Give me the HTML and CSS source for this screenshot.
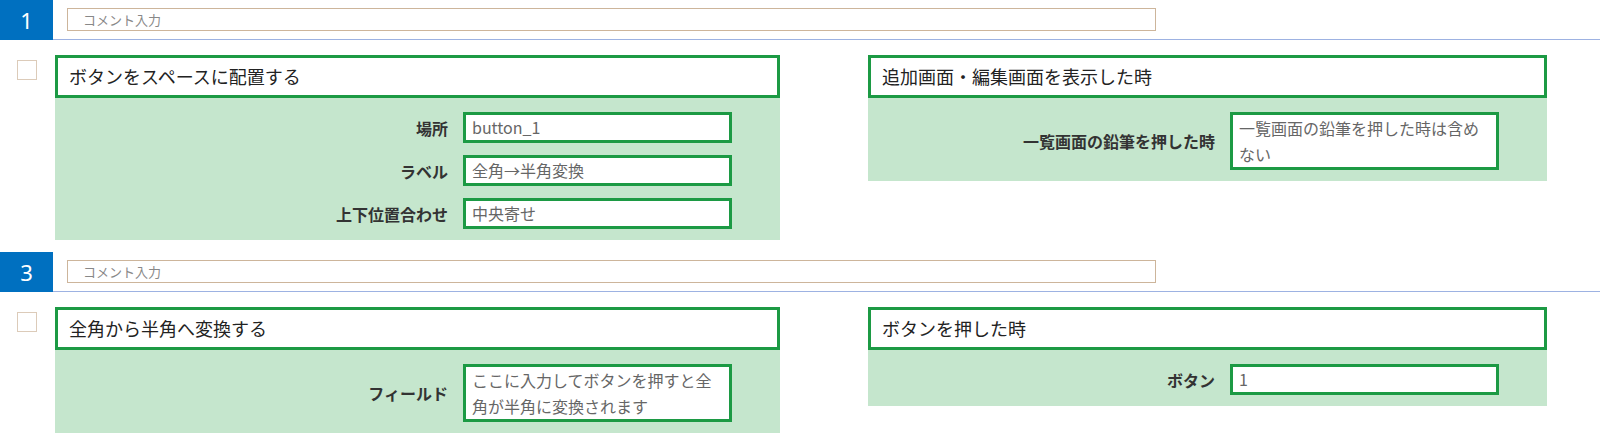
FILE: index.html
```html
<!DOCTYPE html>
<html>
	<head>
		<meta charset="UTF-8" />
		<title>Rules</title>
		<link rel="stylesheet" href="styles.css">
	</head>
	<body>
		<div class="section">
			<div class="section-head">
				<div class="num">1</div>
				<div class="head-line">
					<div class="comment">コメント入力</div>
				</div>
			</div>
			<div class="section-body">
				<span class="check"></span>
				<div class="card card-left">
					<div class="card-title">ボタンをスペースに配置する</div>
					<div class="fields">
						<div class="field"><span class="label">場所</span><div class="val">button_1</div></div>
						<div class="field"><span class="label">ラベル</span><div class="val">全角→半角変換</div></div>
						<div class="field"><span class="label">上下位置合わせ</span><div class="val">中央寄せ</div></div>
					</div>
				</div>
				<div class="card card-right">
					<div class="card-title">追加画面・編集画面を表示した時</div>
					<div class="fields">
						<div class="field"><span class="label">一覧画面の鉛筆を押した時</span><div class="val multi">一覧画面の鉛筆を押した時は含めない</div></div>
					</div>
				</div>
			</div>
		</div>
		<div class="section">
			<div class="section-head">
				<div class="num">3</div>
				<div class="head-line">
					<div class="comment">コメント入力</div>
				</div>
			</div>
			<div class="section-body">
				<span class="check"></span>
				<div class="card card-left">
					<div class="card-title">全角から半角へ変換する</div>
					<div class="fields">
						<div class="field"><span class="label">フィールド</span><div class="val multi">ここに入力してボタンを押すと全角が半角に変換されます</div></div>
					</div>
				</div>
				<div class="card card-right">
					<div class="card-title">ボタンを押した時</div>
					<div class="fields">
						<div class="field"><span class="label">ボタン</span><div class="val">1</div></div>
					</div>
				</div>
			</div>
		</div>
	</body>
</html>
```

FILE: styles.css
```css
* {
	margin: 0;
	padding: 0;
	box-sizing: border-box;
}
body {
	font-family: "Noto Sans CJK JP", "Noto Sans", sans-serif;
	color: #333;
	background: #fff;
}
.section-head {
	display: flex;
	height: 40px;
}
.num {
	width: 53px;
	height: 40px;
	background: #0070c0;
	color: #fff;
	font-family: "Noto Sans", sans-serif;
	font-size: 22px;
	line-height: 40px;
	text-align: center;
}
.head-line {
	flex: 1;
	border-bottom: 1px solid #9db2e2;
	padding: 8px 0 0 14px;
}
.comment {
	width: 1089px;
	height: 23px;
	border: 1px solid #cdb59b;
	padding-left: 15px;
	font-size: 13px;
	line-height: 21px;
	color: #888;
}
.section-body {
	display: flex;
	align-items: flex-start;
	padding: 15px 0 12px;
}
.check {
	width: 20px;
	height: 20px;
	margin: 5px 18px 0 17px;
	border: 1px solid #dccbb9;
}
.card {
	background: #c5e6cd;
}
.card-left {
	width: 725px;
}
.card-right {
	width: 679px;
	margin-left: 88px;
}
.card-title {
	height: 43px;
	background: #fff;
	border: 3px solid #1c9a44;
	padding: 0 11px;
	font-size: 18px;
	line-height: 36px;
	color: #222;
}
.fields {
	display: flex;
	flex-direction: column;
	align-items: flex-end;
	gap: 12px;
	padding: 14px 48px 11px 0;
}
.field {
	display: flex;
	align-items: center;
	gap: 15px;
}
.label {
	font-size: 16px;
	font-weight: bold;
	color: #333;
}
.val {
	width: 269px;
	height: 31px;
	background: #fff;
	border: 3px solid #1c9a44;
	padding: 0 6px;
	font-size: 16px;
	line-height: 24px;
	color: #666;
	white-space: nowrap;
}
.val.multi {
	height: 58px;
	line-height: 26px;
	white-space: normal;
}
```
